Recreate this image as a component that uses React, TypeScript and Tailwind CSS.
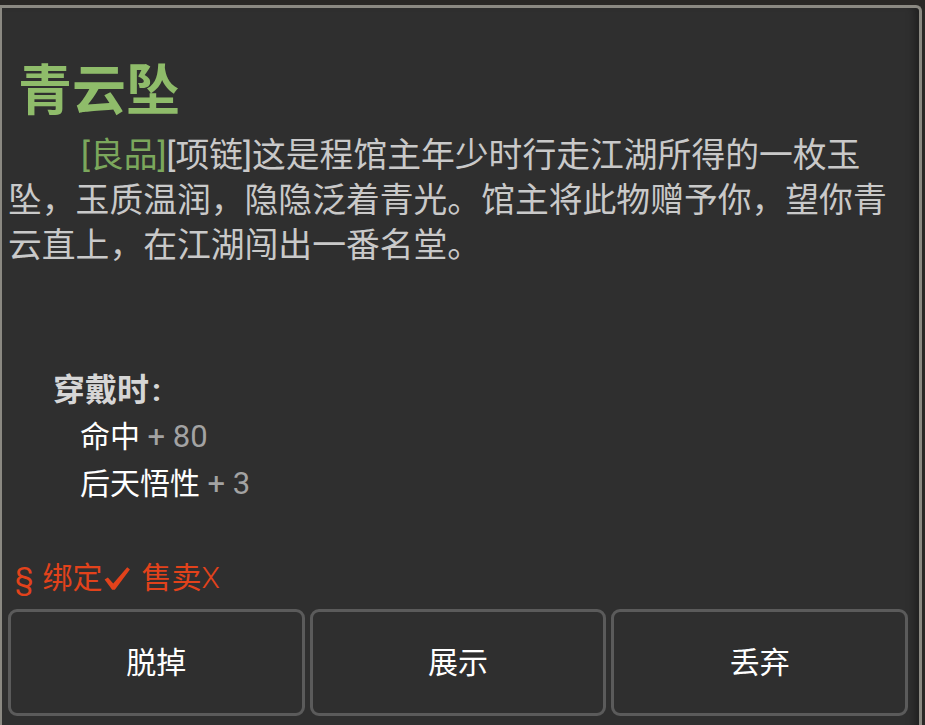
import React from 'react';

const font = { fontFamily: 'Roboto, "Noto Sans CJK SC", sans-serif' };

const ActionButton = ({ label }: { label: string }) => (
  <button className="h-[107px] rounded-[9px] border-[3px] border-[#5b5b5b] bg-[#2f2f2f] text-[30px] text-white flex items-center justify-center">
    {label}
  </button>
);

const StatLine = ({ name, value }: { name: string; value: string }) => (
  <div className="h-[47px] leading-[47px] text-[30px] text-white pl-[78px]">
    {name} <span className="text-[31px] text-[#a3a3a3]">+ {value}</span>
  </div>
);

const Check = () => (
  <svg viewBox="0 0 26 26" className="inline-block w-[28px] h-[28px] ml-[1px]">
    <path d="M1.5 14.5 L4.5 12.5 L9.5 18 L22.5 3 L25 5 L11 24 L8.5 24 Z" fill="#e2421b" />
  </svg>
);

const ItemDetail = () => {
  return (
    <div className="w-[925px] h-[725px] bg-[#2a2826] pt-[5px] pr-[3px] overflow-hidden" style={font}>
      <div className="h-[730px] bg-[#2f2f2f] border-t-[3px] border-l-[2px] border-r-[3px] border-[#8b8982] rounded-tr-[6px] shadow-[inset_-10px_0_8px_-6px_rgba(0,0,0,0.35)] flex flex-col">
        <h1 className="mt-[57px] pl-[16px] text-[54px] leading-[54px] font-bold text-[#8fbc6a]">青云坠</h1>

        <p className="mt-[14px] ml-[6px] w-[882px] text-[33.8px] leading-[45px] text-[#c9c9c9] indent-[73px]">
          <span className="text-[#7ba75c]">[良品]</span>[项链]这是程馆主年少时行走江湖所得的一枚玉坠，玉质温润，隐隐泛着青光。馆主将此物赠予你，望你青云直上，在江湖闯出一番名堂。
        </p>

        <div className="mt-[99px] pl-[51px] h-[46px] leading-[46px] text-[32px] font-bold text-[#d6d6d6]">
          穿戴时<span className="ml-[3px]">:</span>
        </div>
        <StatLine name="命中" value="80" />
        <StatLine name="后天悟性" value="3" />

        <div className="mt-[51px] pl-[13px] h-[40px] leading-[40px] text-[30px] text-[#e2421b] flex items-center">
          <span>§</span>
          <span className="ml-[9px]">绑定</span>
          <Check />
          <span className="ml-[10px]">售卖</span>
          <span className="font-light">X</span>
        </div>

        <div className="mt-[11px] ml-[6px] w-[900px] grid grid-cols-3 gap-[5px]">
          <ActionButton label="脱掉" />
          <ActionButton label="展示" />
          <ActionButton label="丢弃" />
        </div>
      </div>
    </div>
  );
};

export default function App() {
  return <ItemDetail />;
}
